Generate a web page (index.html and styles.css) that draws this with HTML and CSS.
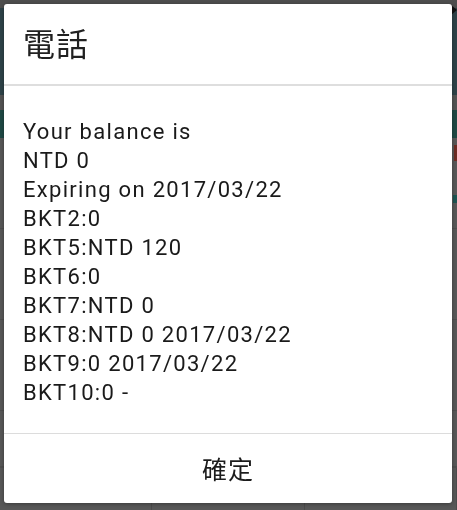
FILE: index.html
```html
<!DOCTYPE html>
<html lang="zh-Hant">
<head>
    <meta charset="UTF-8">
    <meta name="viewport" content="width=device-width, initial-scale=1.0">
    <title>電話</title>
    <link rel="stylesheet" href="styles.css">
</head>
<body>
    <!-- app behind the dialog, dimmed -->
    <div class="fondo">
        <div class="barra-estado"></div>
        <div class="cabecera"><span class="flecha"></span></div>
        <div class="hueco"></div>
        <div class="pestanas"></div>
        <div class="fila"><span class="marca roja"></span></div>
        <div class="fila"><span class="marca verde"></span></div>
        <div class="fila"></div>
        <div class="fila corta"></div>
        <div class="pie">
            <div></div><div></div><div></div>
        </div>
    </div>

    <section class="dialogo">
        <h1 class="titulo">電話</h1>
        <div class="mensaje">
            <p>Your balance is</p>
            <p>NTD 0</p>
            <p>Expiring on 2017/03/22</p>
            <p>BKT2:0</p>
            <p>BKT5:NTD 120</p>
            <p>BKT6:0</p>
            <p>BKT7:NTD 0</p>
            <p>BKT8:NTD 0 2017/03/22</p>
            <p>BKT9:0 2017/03/22</p>
            <p>BKT10:0 -</p>
        </div>
        <div class="acciones">
            <a href="#" class="boton">確定</a>
        </div>
    </section>
</body>
</html>
```

FILE: styles.css
```css
body {
    margin: 0px;
    padding: 0px;
    background-color: #585858;
    font-family: Roboto, "Noto Sans CJK TC", sans-serif;
    overflow: hidden;
}

/* fondo (la app oscurecida) */
.fondo {
    height: 510px;
    display: flex;
    flex-direction: column;
}

.barra-estado {
    height: 8px;
    background-color: #4e4e4e;
}

.cabecera {
    height: 87px;
    background-color: #2e4349;
    display: flex;
    justify-content: flex-end;
    align-items: center;
}

.flecha {
    width: 0;
    height: 0;
    border-top: 5px solid transparent;
    border-bottom: 5px solid transparent;
    border-left: 6px solid #111;
    margin-right: 0px;
    margin-top: -84px;
}

.hueco {
    height: 15px;
    background-color: #545454;
}

.pestanas {
    height: 28px;
    background-color: #1f4a45;
}

.fila {
    height: 90px;
    border-bottom: 1px solid #4f4f4f;
    display: flex;
    justify-content: flex-end;
    align-items: center;
}

.fila.corta {
    height: 55px;
}

.marca {
    width: 3px;
    height: 16px;
}

.roja {
    background-color: #6e2c24;
    margin-top: -60px;
}

.verde {
    background-color: #1d5452;
    width: 4px;
    height: 8px;
    margin-top: -150px;
}

.pie {
    flex: 1;
    display: flex;
    border-top: 1px solid #505050;
}

.pie div {
    flex: 1;
    border-right: 1px solid #4c4c4c;
}

/* dialogo */
.dialogo {
    position: fixed;
    top: 4px;
    left: 4px;
    width: 448px;
    height: 499px;
    background-color: #fff;
    border-radius: 3px;
    box-shadow: 0px 1px 4px rgba(0, 0, 0, 0.35);
    display: flex;
    flex-direction: column;
    overflow: hidden;
}

.titulo {
    margin: 0;
    height: 82px;
    display: flex;
    align-items: center;
    padding-left: 19px;
    padding-bottom: 4px;
    box-sizing: border-box;
    font-size: 32px;
    font-weight: normal;
    letter-spacing: 1px;
    color: #212121;
    border-bottom: 2px solid #dedede;
}

.mensaje {
    flex: 1;
    padding: 31px 19px 0px 19px;
}

.mensaje p {
    margin: 0;
    font-size: 22px;
    line-height: 29px;
    letter-spacing: 1.3px;
    color: #1a1a1a;
}

.acciones {
    height: 69px;
    border-top: 1px solid #dcdcdc;
    display: flex;
    justify-content: center;
    align-items: center;
}

.boton {
    text-decoration: none;
    color: #1c1c1c;
    font-size: 25px;
    letter-spacing: 1px;
    padding-bottom: 2px;
}
```
